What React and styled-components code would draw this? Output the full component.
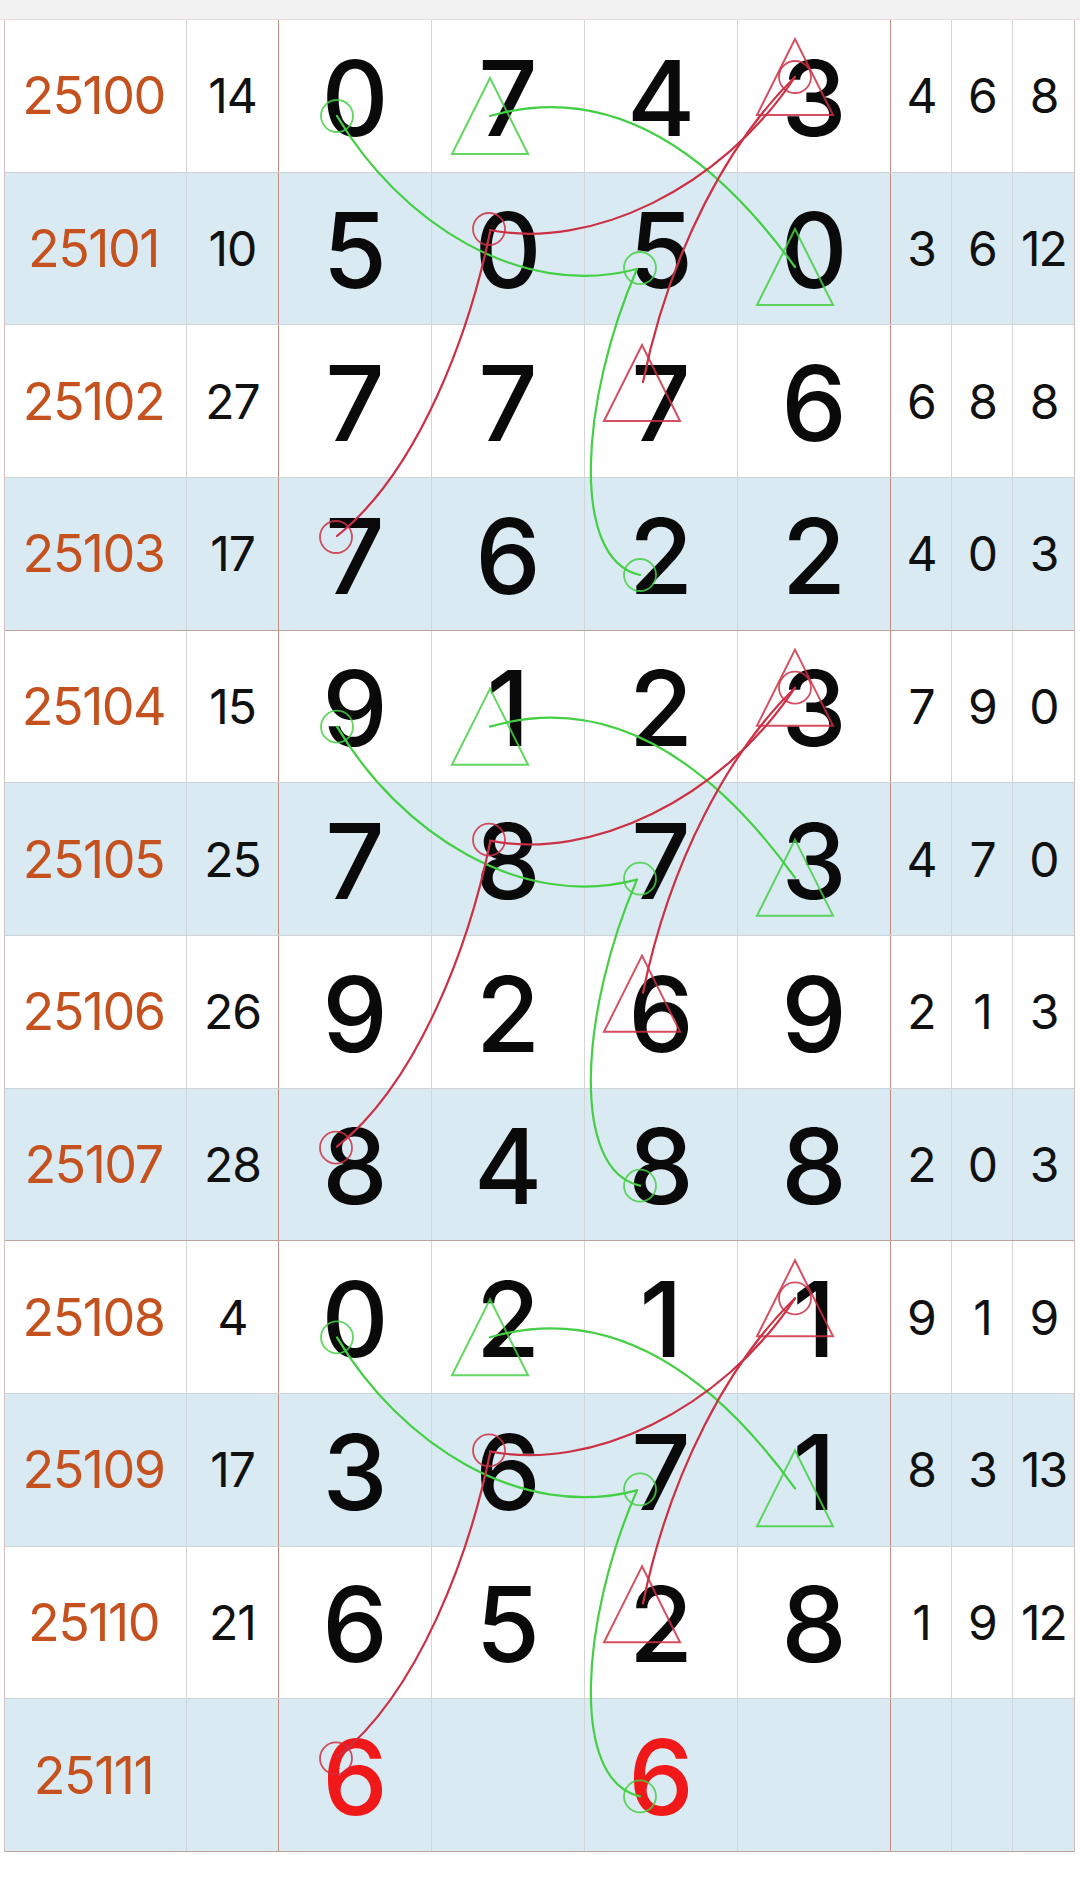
import React from "react";
import styled, { createGlobalStyle } from "styled-components";

const GlobalStyle = createGlobalStyle`
  html, body { margin: 0; padding: 0; background: #ffffff; }
  body { font-family: Inter, "Noto Sans", "Liberation Sans", sans-serif; }
`;

const ROW_H = 1832 / 12;
const COLS = "182px 92px 153px 153px 153px 153px 1fr 1fr 1fr";

const rows = [
  ["25100", "14", ["0", "7", "4", "3"], ["4", "6", "8"]],
  ["25101", "10", ["5", "0", "5", "0"], ["3", "6", "12"]],
  ["25102", "27", ["7", "7", "7", "6"], ["6", "8", "8"]],
  ["25103", "17", ["7", "6", "2", "2"], ["4", "0", "3"]],
  ["25104", "15", ["9", "1", "2", "3"], ["7", "9", "0"]],
  ["25105", "25", ["7", "8", "7", "3"], ["4", "7", "0"]],
  ["25106", "26", ["9", "2", "6", "9"], ["2", "1", "3"]],
  ["25107", "28", ["8", "4", "8", "8"], ["2", "0", "3"]],
  ["25108", "4", ["0", "2", "1", "1"], ["9", "1", "9"]],
  ["25109", "17", ["3", "6", "7", "1"], ["8", "3", "13"]],
  ["25110", "21", ["6", "5", "2", "8"], ["1", "9", "12"]],
  ["25111", "", ["6", "", "6", ""], ["", "", ""]],
];

const Page = styled.div`
  width: 1080px;
  min-height: 1880px;
  background: #ffffff;
`;

const TopBand = styled.div`
  height: 19px;
  background: #f2f2f2;
  border-bottom: 1px solid #f1d9d9;
`;

const TableWrap = styled.div`
  position: relative;
  margin-left: 4px;
  width: 1069px;
  border-left: 1px solid #d2c2bf;
  border-right: 1px solid #d2bcbc;
`;

const Row = styled.div`
  display: grid;
  grid-template-columns: ${COLS};
  height: ${ROW_H}px;
  box-sizing: border-box;
  background: ${(p) => (p.$alt ? "#d9eaf2" : "#ffffff")};
  border-bottom: 1px solid ${(p) => (p.$groupEnd ? "#bea39a" : "#cdd4d8")};
`;

const Cell = styled.div`
  display: flex;
  align-items: center;
  justify-content: center;
  border-right: 1px solid ${(p) => (p.$sep ? "#bf8e80" : "#d1d6d9")};
  overflow: hidden;
  white-space: nowrap;
  &:last-child { border-right: none; }
`;

const Period = styled.span`
  color: #c4511e;
  font-size: 52px;
  letter-spacing: -1.5px;
  margin-right: 4px;
`;

const Sum = styled.span`
  color: #111;
  font-size: 48px;
  letter-spacing: -1px;
`;

const Big = styled.span`
  color: ${(p) => (p.$hot ? "#f01818" : "#0a0a0a")};
  font-size: 104px;
  font-weight: 500;
  line-height: 1;
  margin-top: 4px;
`;

const Small = styled.span`
  color: #111;
  font-size: 48px;
  letter-spacing: -2px;
`;

const Overlay = styled.svg`
  position: absolute;
  left: 0;
  top: 0;
  width: 1068px;
  height: 1832px;
  pointer-events: none;
  overflow: visible;
`;

const G = "#45cf45";
const R = "#cc3045";

function Tri({ cx, cy, color }) {
  const h = 38;
  return (
    <polygon
      points={`${cx},${cy - h} ${cx - h},${cy + h} ${cx + h},${cy + h}`}
      fill="none"
      stroke={color}
      strokeWidth="2"
      opacity="0.85"
    />
  );
}

function Ring({ cx, cy, color }) {
  return <circle cx={cx} cy={cy} r="16" fill="none" stroke={color} strokeWidth="1.8" opacity="0.85" />;
}

function Pattern({ dy }) {
  return (
    <g transform={`translate(0 ${dy})`}>
      <g fill="none" strokeWidth="2.2" strokeLinecap="round">
        <path d="M337,116 C400,222 520,300 637,269" stroke={G} />
        <path d="M637,269 C580,400 570,560 640,575" stroke={G} />
        <path d="M490,116 C580,90 685,115 795,267" stroke={G} />
        <path d="M795,77 C720,190 590,250 490,230" stroke={R} />
        <path d="M490,232 C470,330 420,470 337,536" stroke={R} />
        <path d="M795,77 C730,140 670,250 643,382" stroke={R} />
      </g>
      <Ring cx={337} cy={116} color={G} />
      <Ring cx={640} cy={268} color={G} />
      <Ring cx={640} cy={575} color={G} />
      <Tri cx={490} cy={116} color={G} />
      <Tri cx={795} cy={267} color={G} />
      <Ring cx={795} cy={77} color={R} />
      <Tri cx={795} cy={77} color={R} />
      <Ring cx={489} cy={229} color={R} />
      <Ring cx={336} cy={537} color={R} />
      <Tri cx={642} cy={383} color={R} />
    </g>
  );
}

export default function App() {
  return (
    <Page>
      <GlobalStyle />
      <TopBand />
      <TableWrap>
        {rows.map(([period, sum, digits, tails], i) => (
          <Row key={period} $alt={i % 2 === 1} $groupEnd={i % 4 === 3}>
            <Cell>
              <Period>{period}</Period>
            </Cell>
            <Cell $sep>
              <Sum>{sum}</Sum>
            </Cell>
            {digits.map((d, j) => (
              <Cell key={j} $sep={j === 3}>
                <Big $hot={i === rows.length - 1}>{d}</Big>
              </Cell>
            ))}
            {tails.map((t, j) => (
              <Cell key={`t${j}`}>
                <Small>{t}</Small>
              </Cell>
            ))}
          </Row>
        ))}
        <Overlay viewBox="5 20 1068 1832">
          <Pattern dy={0} />
          <Pattern dy={ROW_H * 4} />
          <Pattern dy={ROW_H * 8} />
        </Overlay>
      </TableWrap>
    </Page>
  );
}
